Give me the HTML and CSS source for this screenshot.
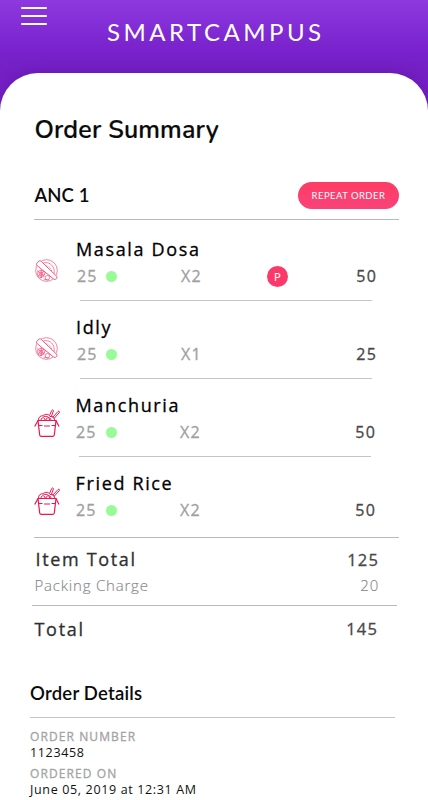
FILE: index.html
```html
<!DOCTYPE html>
<html lang="en">
<head>
<meta charset="utf-8">
<title>SmartCampus - Order Summary</title>
<link rel="stylesheet" href="styles.css">
</head>
<body>
<svg class="symbols" aria-hidden="true">
  <symbol id="dosa" viewBox="0 0 24 24">
    <g fill="none" stroke="#f2547c" stroke-width=".75">
      <circle cx="12" cy="12" r="11.300"/>
      <path d="M8 4.500c5-2 9 .5 11 4 1.200 2.500 1.300 5 .7 7.500"/>
      <path d="M11 7c3.500 0 6 3 6.500 6" stroke-dasharray="1 1"/>
      <circle cx="6.200" cy="15.500" r="3.700"/><circle cx="6.200" cy="15.500" r="1.800"/>
      <circle cx="13" cy="19.500" r="2.300"/><path d="M2 12l8 6M3 18l6-5M5 20l6-5M6.500 11v9M9 21l5 1"/>
      <path d="M2.300 3.800l2-1.600c.8-.5 1.600-.3 2.300.4l15.600 15c1 1 .9 2.200.1 3-.9 1-2.200 1-3.200 0L2.300 7c-1-1.100-.9-2.300 0-3.200z" fill="#fff" stroke="#ee3a69" stroke-width=".9"/>
    </g>
  </symbol>
  <symbol id="box" viewBox="0 0 26 28">
    <g fill="none" stroke="#ed1651" stroke-width="1.200">
      <path d="M4 11.500h18l-1.700 14.500c-.1 1-.6 1.300-1.500 1.300H7.200c-1 0-1.400-.4-1.500-1.300z"/>
      <path d="M4 11.500L.7 17.500M22 11.500l3 6M4.500 16.500h4M10 17h6M17.500 16.500h4"/>
      <path d="M4.500 11c0-3 2-4.500 4.500-4.200C11 4.500 15 5 16 7.500c3-.5 4.500 1 4.500 3.500M7 11c0-3 4-3 4 0M9.500 7.500c4-.8 6 1 6 3.500M12 11c0-3 5-3 5 0" stroke-width="1"/>
      <path d="M15.500 6.500l2.200-5c.5-1 2-.6 1.700.6L17.500 7M18.500 8.500l5.500-6c1-.8 2 .3 1.300 1.200l-5.500 6" stroke-width="1"/>
    </g>
  </symbol>
</svg>
<div class="screen">
  <header class="topbar">
    <button class="menu" aria-label="Menu"><span></span><span></span><span></span></button>
    <div class="brand">SMARTCAMPUS</div>
  </header>
  <main class="sheet">
    <h1>Order Summary</h1>
    <div class="vendor"><h2>ANC 1</h2><button class="repeat">REPEAT ORDER</button></div>
    <ul class="items">
      <li class="item">
        <svg class="icon dosa"><use href="#dosa"/></svg>
        <div class="info"><div class="name">Masala Dosa</div>
          <div class="meta"><span class="price">25</span><i class="dot"></i><span class="qty">X2</span><span class="parcel">P</span><span class="amount">50</span></div></div>
      </li>
      <li class="item">
        <svg class="icon dosa"><use href="#dosa"/></svg>
        <div class="info"><div class="name">Idly</div>
          <div class="meta"><span class="price">25</span><i class="dot"></i><span class="qty">X1</span><span class="amount">25</span></div></div>
      </li>
      <li class="item shifted">
        <svg class="icon box"><use href="#box"/></svg>
        <div class="info"><div class="name">Manchuria</div>
          <div class="meta"><span class="price">25</span><i class="dot"></i><span class="qty">X2</span><span class="amount">50</span></div></div>
      </li>
      <li class="item shifted">
        <svg class="icon box"><use href="#box"/></svg>
        <div class="info"><div class="name">Fried Rice</div>
          <div class="meta"><span class="price">25</span><i class="dot"></i><span class="qty">X2</span><span class="amount">50</span></div></div>
      </li>
    </ul>
    <section class="charges">
      <div class="line subtotal"><span>Item Total</span><span>125</span></div>
      <div class="line packing"><span>Packing Charge</span><span>20</span></div>
    </section>
    <div class="line total"><span>Total</span><span>145</span></div>
    <section class="details">
      <h2>Order Details</h2>
      <dl>
        <dt>ORDER NUMBER</dt><dd>1123458</dd>
        <dt>ORDERED ON</dt><dd>June 05, 2019 at 12:31 AM</dd>
      </dl>
    </section>
  </main>
</div>
</body>
</html>
```
FILE: styles.css
```css
* { box-sizing: border-box; margin: 0; padding: 0; }
body { background: #fff; font-family: "Open Sans", sans-serif; overflow: hidden; }
button { border: 0; background: none; }
.symbols { display: none; }
.screen { height: 800px; overflow: hidden; background: linear-gradient(#8d39df 0, #7821cc 52px, #7420c4 73px, #7821cc 115px); }
.topbar { display: flex; height: 73px; padding: 7px 0 0 21px; }
.menu { display: flex; flex-direction: column; gap: 6px; width: 26px; height: 18px; }
.menu span { width: 26px; height: 2px; border-radius: 1px; background: #fff; }
.brand { margin: 9px 0 0 60px; color: #fff; font: 400 24px/32px Lato, sans-serif; letter-spacing: 3.5px; }
.sheet { height: 727px; padding: 40px 0 0; background: #fff; border-radius: 38px 38px 0 0; box-shadow: 0 0 14px rgba(70, 10, 130, .35); }
h1, h2 { color: #0a0a0a; }
h1 { margin-left: 34.500px; font: 600 25px/34px Nunito, Lato, sans-serif; letter-spacing: .17px; -webkit-text-stroke: .2px #0a0a0a; }
.vendor { display: flex; align-items: center; justify-content: space-between; margin: 33px 29px 0 34px; height: 40px; padding-bottom: 9px; border-bottom: 1px solid #b9b9b9; }
.vendor h2 { margin-left: .5px; font: 600 18.500px/26px Lato, sans-serif; letter-spacing: .1px; }
.repeat { width: 101px; height: 27px; border-radius: 14px; background: linear-gradient(#ff3b63, #f9437a); color: #fff; font: 400 9.500px/27px Lato, sans-serif; letter-spacing: .45px; }
.items { list-style: none; }
.item { display: flex; height: 78px; padding-left: 35px; }
.item:first-child { height: 79px; padding-top: 1px; }
.icon { flex: none; margin-top: 38px; width: 23px; height: 23px; }
.icon.box { margin: 32px 0 0 -1px; width: 26px; height: 28px; }
.item .info { position: relative; margin-left: 18px; width: 301px; padding-top: 16px; }
.item.shifted .info { margin-left: 15px; }
.item:not(:last-child) .info::after { content: ""; position: absolute; left: 4px; bottom: -2px; width: 292px; height: 1px; background: #c5c5c5; }
.name, .meta, .subtotal, .total, dt { -webkit-text-stroke: .3px currentColor; }
.name { font-size: 18px; line-height: 24px; color: #000; letter-spacing: 1.650px; }
.item.shifted .name { margin-left: .5px; }
.meta { display: flex; align-items: center; height: 22px; margin-top: 4px; font-size: 16px; color: #a0a0a0; letter-spacing: 1.200px; }
.price { width: 29px; margin-left: 1px; }
.item.shifted .price { width: 30px; }
.dot { width: 11px; height: 11px; border-radius: 50%; background: #98fb98; }
.qty { margin-left: 64px; }
.item.shifted .qty { margin-left: 63px; }
.parcel { width: 21px; height: 21px; margin-left: 65px; border-radius: 50%; background: #fc396b; color: #fff; font: 400 11px/21px Lato, sans-serif; text-align: center; letter-spacing: 0; -webkit-text-stroke: 0; }
.amount { margin-left: auto; color: #484848; }
.item:last-child { height: 82px; }
.charges { margin: 0 29px 0 34px; height: 68px; padding-top: 9px; border-top: 1px solid #b9b9b9; }
.line { display: flex; justify-content: space-between; align-items: center; }
.line span:last-child { color: #484848; }
.subtotal { height: 24px; padding: 0 20px 0 1.500px; font-size: 18px; color: #303030; letter-spacing: 1.650px; }
.subtotal span:last-child, .total span:last-child { font-size: 16.500px; letter-spacing: 1.150px; }
.packing { height: 22px; margin-top: 3px; padding: 0 20px 0 .5px; font-size: 15px; font-weight: 300; color: #888; letter-spacing: .8px; -webkit-text-stroke: .15px #888; }
.packing span:last-child { color: #888; }
.total { height: 35px; margin: 0 31px 0 32px; padding: 11px 19px 0 2.500px; border-top: 1px solid #b9b9b9; font-size: 18px; color: #303030; letter-spacing: 1.700px; }
.details { margin: 39px 33px 0 30px; padding-top: 1px; }
.details h2 { height: 38px; font: 600 18.500px/26px Lato, sans-serif; letter-spacing: .22px; border-bottom: 1px solid #c5c5c5; }
.details dl { padding-top: 10px; }
dt { font-size: 12px; line-height: 17px; color: #a3a3a3; letter-spacing: 1.100px; }
dd { font-size: 12.500px; line-height: 15px; margin-bottom: 5px; color: #111; letter-spacing: .65px; }
```
